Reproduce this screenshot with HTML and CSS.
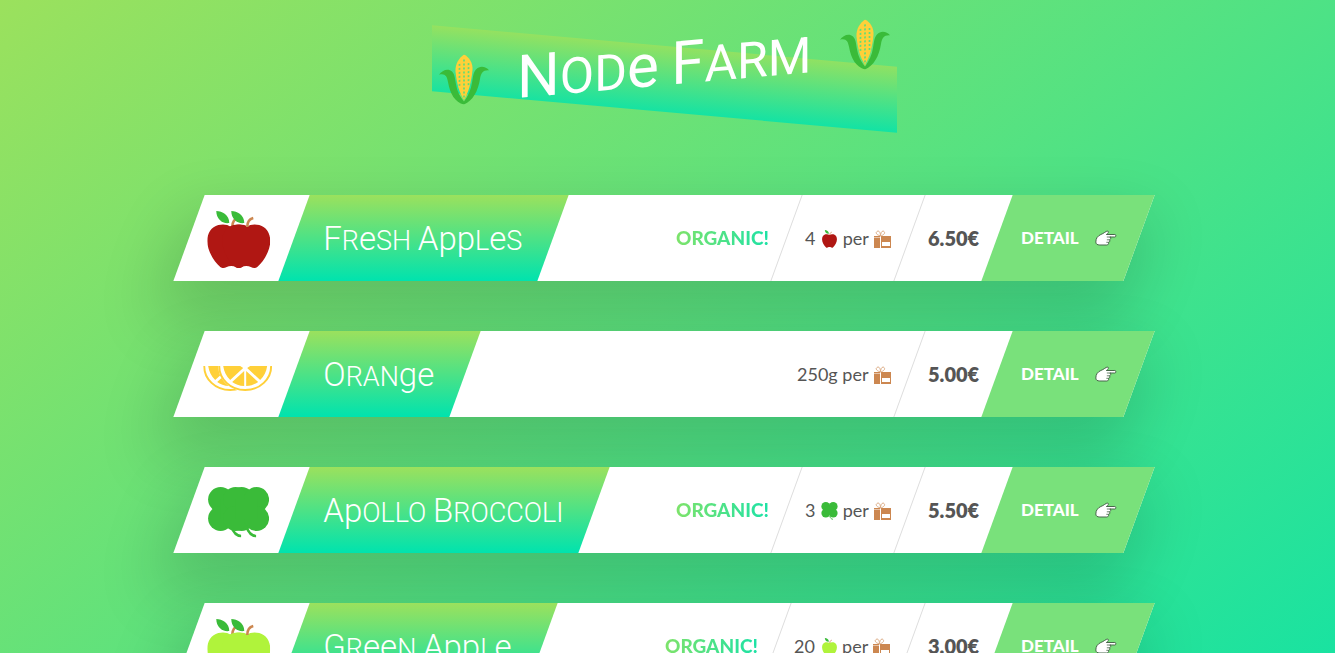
FILE: index.html
```html
<!DOCTYPE html>
<html lang="en">
<head>
<meta charset="utf-8">
<meta name="viewport" content="width=device-width, initial-scale=1">
<title>Node Farm</title>
<link rel="stylesheet" href="styles.css">
</head>
<body>
<svg class="defs" aria-hidden="true">
  <symbol id="corn" viewBox="0 0 50 50">
    <path fill="#3abb39" d="M0 18c3-4 9-6 13-2 3 3 3 8 4 13 1 7 4 13 8 18 4-5 7-11 8-18 1-5 1-10 4-13 4-4 10-2 13 2-6-1-8 2-9 8-2 12-7 21-16 24C16 47 11 38 9 26 8 20 6 17 0 18z"/>
    <path fill="#ffd039" d="M25 0c-5 3-9 9-8.500 16 .5 6 1.500 11 3 17 1.500 5 3.500 9 5.500 12 2-3 4-7 5.500-12 1.500-6 2.500-11 3-17C34 9 30 3 25 0z"/>
    <path stroke="#62dc78" stroke-width="1.700" stroke-dasharray="2 2" fill="none" d="M20.500 9v24M25 5v38M29.500 9v24"/>
  </symbol>
  <symbol id="apple" viewBox="0 0 48 58">
    <path d="M24 16c4-3 9-3 13-2 7 2 11 8 11 16 0 9-6 20-13 26-4 3-6-1-11-1s-7 4-11 1C6 50 0 39 0 30c0-8 4-14 11-16 4-1 9-1 13 2z"/>
    <path fill="none" stroke="#cc8750" stroke-width="2.600" d="M25 16c0-5 2-8 6-9"/>
    <path fill="#3abb39" d="M9 0c6 0 13 4 13 12-7 1-13-4-13-12z"/>
  </symbol>
  <symbol id="slice" viewBox="0 0 54 26">
    <path fill="#fff" d="M0 0h54c0 14-12 25-27 25S0 14 0 0z"/>
    <path fill="none" stroke="#ffd039" stroke-width="2" d="M1 0c0 13 11 24 26 24S53 13 53 0"/>
    <path fill="#ffd039" d="M5 0h17l3 2-13 12C8 10 6 6 5 0zM49 0H32l-3 2 13 12c4-4 6-8 7-14zM26 5v15c-5 0-9-2-12-4zM28 5v15c5 0 9-2 12-4z"/>
  </symbol>
  <symbol id="clover" viewBox="0 0 46 51">
    <circle cx="12.500" cy="12.500" r="12.500"/><circle cx="33.500" cy="12.500" r="12.500"/>
    <circle cx="12.500" cy="31.500" r="12.500"/><circle cx="33.500" cy="31.500" r="12.500"/>
    <path d="M12 12h22v20H12z"/>
    <path fill="none" stroke="#3abb39" stroke-width="2.400" d="M23 39c2 6 5 10 10 10"/>
  </symbol>
  <symbol id="gift" viewBox="0 0 17 18">
    <path fill="#cc8750" d="M0 6h6v12H0zM7 6h10v12H7z"/>
    <path fill="#fff" d="M8 12h8v4H8zM0 7h6v.4H0z"/>
    <path fill="none" stroke="#dcac85" d="M6.500 6C3 5 1 3 3 1.500S6.500 2.500 6.500 6c0-3.500 2-6 3.500-4.500S10 5 6.500 6z"/>
  </symbol>
  <symbol id="hand" viewBox="0 0 22 17">
    <path fill="#fff" stroke="#47664a" stroke-linejoin="round" d="M1 12c0-4 2-6 5-7.500 3-1 5-3.500 7-3.500 1.500 1.500-.5 3-1.500 3.500H20c1.500 0 1.500 2.500 0 2.500h-5c1.500 1 1 2.500-.5 2.800 1 .8.500 2.200-.7 2.500.3 1.200-.3 2.700-1.800 2.700H5C2.500 15 1 14 1 12z"/>
    <path fill="none" stroke="#47664a" stroke-width=".8" d="M12 7h4M12 9.800h2.500M11.500 12.300H14"/>
  </symbol>
</svg>

<header class="header">
  <h1 class="title">
    <svg class="title__icon" aria-hidden="true"><use href="#corn"/></svg>
    <span class="title__text"><span class="cap">N</span>od<span class="low">e</span> <span class="cap">F</span>arm</span>
    <svg class="title__icon" aria-hidden="true"><use href="#corn"/></svg>
  </h1>
</header>

<main class="cards">
  <article class="card">
    <div class="card__pic"><svg class="pic pic--apple red" viewBox="0 0 63 58" aria-hidden="true"><use href="#apple" width="48" height="58"/><use href="#apple" x="15" width="48" height="58"/></svg></div>
    <div class="card__name"><h2><span class="cap">F</span>r<span class="low">e</span>sh <span class="cap">A</span><span class="low">pp</span>l<span class="low">e</span>s</h2></div>
    <div class="card__organic"><p class="organic">Organic!</p></div>
    <div class="card__cell"><p>4 <svg class="mini red" aria-hidden="true"><use href="#apple"/></svg> per <svg class="mini" aria-hidden="true"><use href="#gift"/></svg></p></div>
    <div class="card__cell"><p class="price">6.50€</p></div>
    <a class="card__link" href="#"><span>Detail</span><svg class="hand" aria-hidden="true"><use href="#hand"/></svg></a>
  </article>

  <article class="card">
    <div class="card__pic"><svg class="pic pic--slice" viewBox="0 0 69 26" aria-hidden="true"><use href="#slice" width="54" height="26"/><use href="#slice" x="15" width="54" height="26"/></svg></div>
    <div class="card__name"><h2><span class="cap">O</span>ran<span class="low">ge</span></h2></div>
    <div class="card__cell card__cell--first"><p>250g per <svg class="mini" aria-hidden="true"><use href="#gift"/></svg></p></div>
    <div class="card__cell"><p class="price">5.00€</p></div>
    <a class="card__link" href="#"><span>Detail</span><svg class="hand" aria-hidden="true"><use href="#hand"/></svg></a>
  </article>

  <article class="card">
    <div class="card__pic"><svg class="pic pic--clover green" viewBox="0 0 61 51" aria-hidden="true"><use href="#clover" width="46" height="51"/><use href="#clover" x="15" width="46" height="51"/></svg></div>
    <div class="card__name"><h2><span class="cap">A</span><span class="low">p</span>ollo <span class="cap">B</span>roccoli</h2></div>
    <div class="card__organic"><p class="organic">Organic!</p></div>
    <div class="card__cell"><p>3 <svg class="mini green" aria-hidden="true"><use href="#clover"/></svg> per <svg class="mini" aria-hidden="true"><use href="#gift"/></svg></p></div>
    <div class="card__cell"><p class="price">5.50€</p></div>
    <a class="card__link" href="#"><span>Detail</span><svg class="hand" aria-hidden="true"><use href="#hand"/></svg></a>
  </article>

  <article class="card">
    <div class="card__pic"><svg class="pic pic--apple lime" viewBox="0 0 63 58" aria-hidden="true"><use href="#apple" width="48" height="58"/><use href="#apple" x="15" width="48" height="58"/></svg></div>
    <div class="card__name"><h2><span class="cap">G</span>r<span class="low">ee</span>n <span class="cap">A</span><span class="low">pp</span>l<span class="low">e</span></h2></div>
    <div class="card__organic"><p class="organic">Organic!</p></div>
    <div class="card__cell"><p>20 <svg class="mini lime" aria-hidden="true"><use href="#apple"/></svg> per <svg class="mini" aria-hidden="true"><use href="#gift"/></svg></p></div>
    <div class="card__cell"><p class="price">3.00€</p></div>
    <a class="card__link" href="#"><span>Detail</span><svg class="hand" aria-hidden="true"><use href="#hand"/></svg></a>
  </article>
</main>
</body>
</html>
```
FILE: styles.css
```css
* {
  box-sizing: border-box;
  margin: 0;
  padding: 0;
}

html {
  background: linear-gradient(to bottom right, #9be15d, #00e3ae);
}

body {
  padding: 25px 57px 236px 50px;
  color: #555;
  font: 400 18px/24px Lato, "Open Sans", sans-serif;
}

.defs {
  position: absolute;
  width: 0;
  height: 0;
}

.header {
  display: flex;
  justify-content: center;
  margin-bottom: 97px;
}

.title {
  position: relative;
  display: flex;
  align-items: center;
  gap: 28px;
  padding: 0 7px;
  color: #fff;
  font: 400 50px/60px Roboto, sans-serif;
  text-transform: uppercase;
  white-space: nowrap;
  transform: skewY(-5deg);
}

.title__text {
  padding-top: 10px;
}

.title .cap,
.title .low {
  font-size: 60px;
}

.title::before {
  content: "";
  position: absolute;
  z-index: -1;
  top: 21px;
  left: 0;
  width: 100%;
  height: 66px;
  background: linear-gradient(to bottom, #9be15d, #00e3ae);
  opacity: .8;
  transform: skewY(10deg);
}

.title__icon {
  width: 50px;
  height: 50px;
}

.low {
  text-transform: none;
}

.cards {
  max-width: 950px;
  margin: 0 auto;
}

.card {
  display: flex;
  min-height: 86px;
  margin-bottom: 50px;
  background: #fff;
  box-shadow: 0 30px 60px 10px rgba(0, 0, 0, .15);
  transform: skewX(-20deg);
}

.card > * {
  display: flex;
  align-items: center;
}

.card > * > * {
  transform: skewX(20deg);
}

.card__pic {
  justify-content: center;
  width: 105px;
  padding: 4px 4px 0 0;
}

.pic--apple {
  width: 63px;
  height: 58px;
}

.pic--slice {
  width: 69px;
  height: 26px;
  margin-top: 6px;
}

.pic--clover {
  width: 61px;
  height: 51px;
}

.red {
  fill: #b01713;
}

.lime {
  fill: #b0f33b;
}

.green {
  fill: #3abb39;
}

.card__name {
  padding: 4px 30px 0;
  background: linear-gradient(to bottom, #9be15d, #00e3ae);
}

.card__name h2 {
  color: #fff;
  font: 300 27px/44px Roboto, sans-serif;
  text-transform: uppercase;
  white-space: nowrap;
}

.card__name .cap,
.card__name .low {
  font-size: 33px;
}

.card__name .low {
  text-transform: none;
}

.card__organic {
  margin-left: auto;
  padding: 0 17px;
}

.organic {
  background: linear-gradient(to right, #7ee36a, #1ce2a6);
  background-clip: text;
  -webkit-background-clip: text;
  color: transparent;
  font-size: 19px;
  font-weight: 900;
  text-transform: uppercase;
}

.card__cell {
  padding: 0 18px;
  border-left: 1px solid #ddd;
  white-space: nowrap;
}

.card__cell--first {
  margin-left: auto;
  border-left: 0;
}

.mini {
  width: 17px;
  height: 18px;
  margin-left: 1px;
  vertical-align: -3px;
}

.price {
  font-size: 20px;
  font-weight: 800;
}

.card__link {
  justify-content: space-between;
  width: 142px;
  padding: 0 22px 0 24px;
  background: #79e17b;
  color: #fff;
  font-size: 17px;
  font-weight: 900;
  text-decoration: none;
  text-transform: uppercase;
}

.hand {
  width: 22px;
  height: 17px;
}
```
